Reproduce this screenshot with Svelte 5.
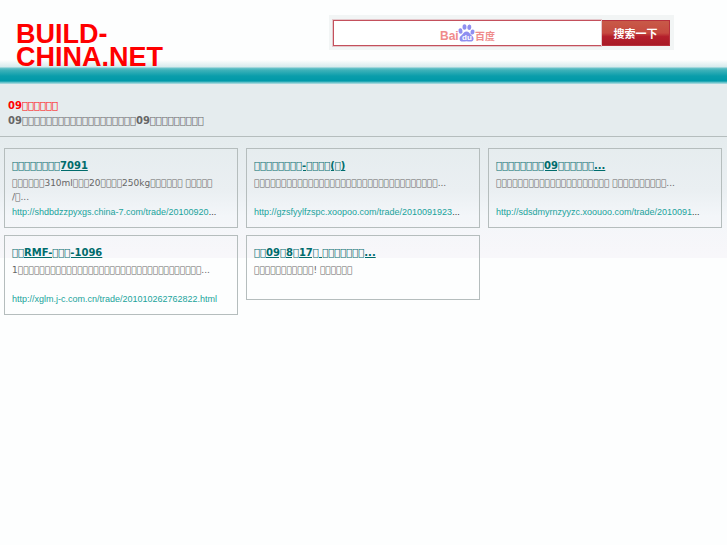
<script lang="ts">
  interface Offer {
    title: string;
    text: string;
    link?: string;
    cut?: boolean;
  }

  // stands in for every character the page font has no glyph for
  const box = (n: number) => '\uE83A'.repeat(n);

  const heading = `09${box(6)}`;
  const summary = `09${box(19)}09${box(9)}`;

  const offers: Offer[] = [
    {
      title: `${box(8)}7091`,
      text: `${box(6)}310ml${box(3)}20${box(4)}250kg${box(6)} ${box(5)}\n/${box(1)}...`,
      link: 'http://shdbdzzpyxgs.china-7.com/trade/20100920',
      cut: true
    },
    {
      title: `${box(8)}-${box(4)}(${box(1)})`,
      text: `${box(34)}...`,
      link: 'http://gzsfyylfzspc.xoopoo.com/trade/2010091923',
      cut: true
    },
    {
      title: `${box(8)}09${box(6)}...`,
      text: `${box(21)} ${box(10)}...`,
      link: 'http://sdsdmyrnzyyzc.xoouoo.com/trade/2010091',
      cut: true
    },
    {
      title: `${box(2)}RMF-${box(3)}-1096`,
      text: `1${box(34)}...`,
      link: 'http://xglm.j-c.com.cn/trade/201010262762822.html'
    },
    {
      title: `${box(2)}09${box(1)}8${box(1)}17${box(1)} ${box(7)}...`,
      text: `${box(11)}! ${box(6)}`
    }
  ];

  let query = $state('');
</script>

<div class="page">
  <header>
    <h1>BUILD-<wbr />CHINA.NET</h1>
    <form class="search" onsubmit={(e) => e.preventDefault()}>
      <div class="field">
        <input type="text" aria-label="百度" bind:value={query} />
        {#if !query}
          <svg class="baidu" viewBox="0 0 56 20" width="56" height="20" aria-hidden="true">
            <text class="bai" x="1" y="17">Bai</text>
            <g fill="#8f8ff0">
              <ellipse cx="21.5" cy="8" rx="2" ry="2.7" transform="rotate(-12 21.5 8)" />
              <ellipse cx="25.5" cy="4" rx="2" ry="2.8" />
              <ellipse cx="30.3" cy="4.2" rx="2" ry="2.8" transform="rotate(8 30.3 4.2)" />
              <ellipse cx="33.5" cy="9" rx="2" ry="2.6" transform="rotate(14 33.5 9)" />
              <path d="M27.500 8.500c2.200 0 3 1.600 4.200 2.900 1.300 1.400 2.900 2.100 2.900 4.300 0 2-1.500 2.900-3.400 2.900-1.400 0-2.300-.4-3.700-.4s-2.300.4-3.700.4c-2 0-3.300-1-3.300-2.900 0-2.200 1.500-2.900 2.800-4.300 1.200-1.300 2-2.900 4.200-2.900z" />
            </g>
            <text class="du" x="23" y="17">du</text>
            <text class="cjk" x="36" y="17">百度</text>
          </svg>
        {/if}
      </div>
      <button type="submit">搜索一下</button>
    </form>
  </header>

  <section class="intro">
    <h2>{heading}</h2>
    <p>{summary}</p>
  </section>

  <main>
    {#each offers as offer}
      <article>
        <h3><a href={offer.link ?? '#top'}>{offer.title}</a></h3>
        <p>{offer.text}</p>
        {#if offer.link}
          <div class="url"><span>{offer.link}</span>{offer.cut ? '...' : ''}</div>
        {/if}
      </article>
    {/each}
  </main>
</div>

<style>
  :global(body) {
    margin: 0;
    background: #fdfefe;
  }

  .page {
    font-family: "DejaVu Sans", sans-serif;
    font-size: 9px;
    color: #666;
    background: linear-gradient(#e5ecee 0 140px, #eaeff2 190px, #f3f6f9 216px, #f8f7fa 258px) no-repeat 0 0 / 100% 258px;
  }

  header {
    display: flex;
    align-items: flex-start;
    box-sizing: border-box;
    height: 84px;
    padding: 15px 16px 0;
    background: linear-gradient(
      #fdfefe 60px,
      #d5eaec 67px,
      #6cc4cb 68px,
      #3fb2ba 70px,
      #0a9dab 76px,
      #0099a8 81px,
      #4cb9c2 82px,
      #b9dfe3 84px
    );
  }

  h1 {
    max-width: 180px;
    margin: 8px 0 0;
    font: bold 27px/23px "Liberation Sans", Arial, sans-serif;
    color: #f00;
  }

  .search {
    display: flex;
    box-sizing: border-box;
    width: 345px;
    height: 35px;
    margin-left: auto;
    margin-right: 37px;
    padding: 5px 4px 4px;
    background: #f2f5f5;
  }

  .field {
    position: relative;
    flex: 1;
  }

  input {
    box-sizing: border-box;
    width: 100%;
    height: 26px;
    padding: 0 6px;
    border: 1px solid #c4505c;
    border-right: 0;
    border-radius: 0;
    outline: 1px solid #e4c8cc;
    background: #fff;
  }

  .baidu {
    position: absolute;
    inset: 3px 0 0;
    margin: 0 auto;
    pointer-events: none;
  }

  .bai {
    font: bold 12px "Liberation Sans", sans-serif;
    fill: #ef8b8b;
  }

  .du {
    font: bold 8px "Liberation Sans", sans-serif;
    fill: #fff;
  }

  .cjk {
    font: bold 10px "Noto Sans CJK SC", sans-serif;
    fill: #ef8b8b;
  }

  button {
    width: 69px;
    height: 26px;
    padding: 0;
    border: 1px solid #b8303c;
    background: linear-gradient(#c85a48, #c64a40 50%, #b41f2c 65%, #a81a26);
    color: #fff;
    font: bold 11px/20px "Noto Sans CJK SC", sans-serif;
  }

  .intro {
    padding: 14px 8px 8px;
    border-bottom: 1px solid #b5bdbd;
    font-weight: bold;
  }

  h2,
  .intro p {
    margin: 0;
    font-size: 10px;
    line-height: 15px;
  }

  h2 {
    color: #f00;
  }

  main {
    display: grid;
    grid-template-columns: repeat(3, 1fr);
    align-items: start;
    gap: 7px 8px;
    padding: 11px 5px 8px 4px;
  }

  article {
    min-width: 0;
    padding: 9px 7px 8px;
    border: 1px solid #b5bdbd;
  }

  h3 {
    margin: 0;
    font-size: 10px;
    line-height: 16px;
  }

  h3 a {
    color: #006c6c;
  }

  article p {
    min-height: 28px;
    margin: 2px 0 0;
    line-height: 14px;
    white-space: pre-line;
  }

  .url {
    margin-top: 1px;
    overflow: hidden;
    font-family: "Liberation Sans", Arial, sans-serif;
    line-height: 14px;
    white-space: nowrap;
    color: #333;
  }

  .url span {
    color: #1aa39c;
  }
</style>
